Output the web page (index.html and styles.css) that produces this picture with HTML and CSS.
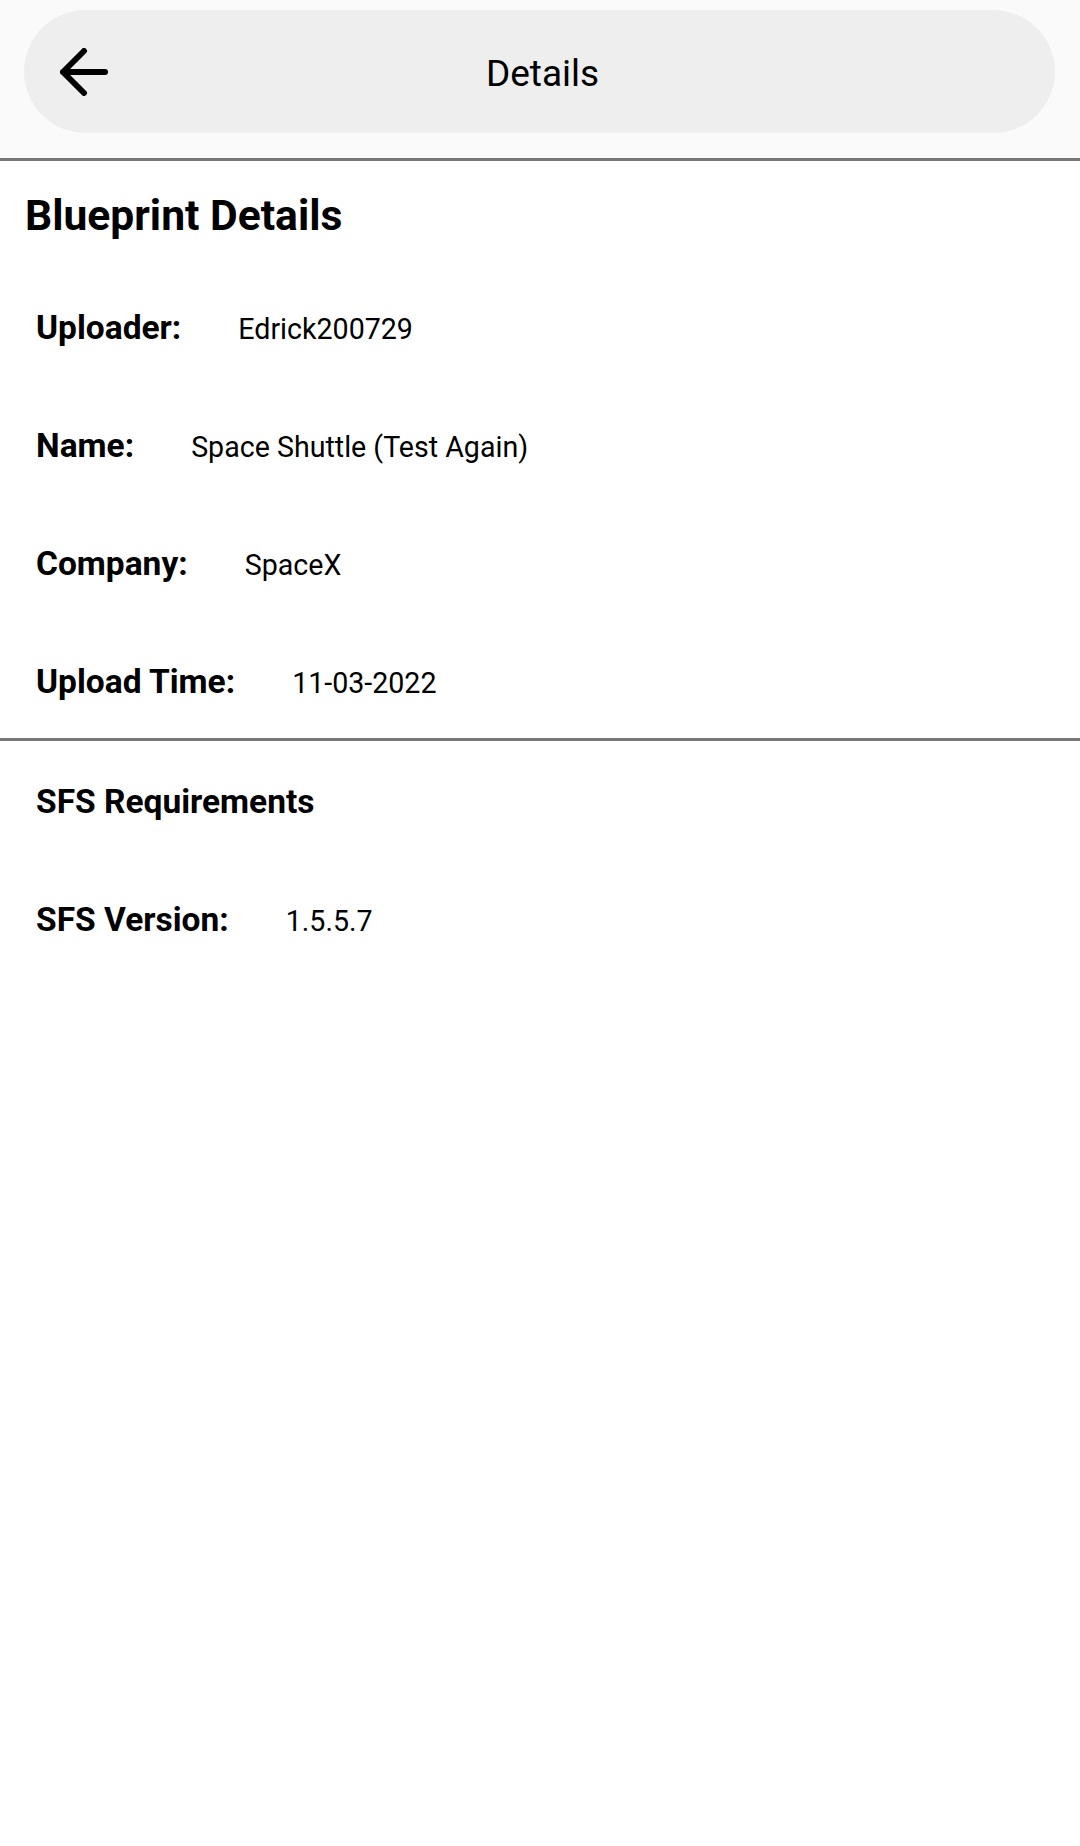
FILE: index.html
```html
<!DOCTYPE html>
<html lang="en">
<head>
<meta charset="utf-8">
<title>Details</title>
<link rel="stylesheet" href="styles.css">
</head>
<body>
  <header class="appbar">
    <div class="pill">
      <div class="pill-left">
        <svg class="back" width="48" height="48" viewBox="0 0 48 48" aria-hidden="true">
          <path d="M3 24 H45 M3 24 L24 3 M3 24 L24 45" fill="none" stroke="#000" stroke-width="6" stroke-linecap="round" stroke-linejoin="round"/>
        </svg>
      </div>
      <div class="pill-title">Details</div>
      <div class="pill-right"></div>
    </div>
  </header>

  <main class="content">
    <h1 class="heading">Blueprint Details</h1>
    <div class="rows">
      <div class="row"><span class="label">Uploader:</span><span class="value">Edrick200729</span></div>
      <div class="row"><span class="label">Name:</span><span class="value">Space Shuttle (Test Again)</span></div>
      <div class="row"><span class="label">Company:</span><span class="value">SpaceX</span></div>
      <div class="row"><span class="label">Upload Time:</span><span class="value">11-03-2022</span></div>
    </div>
    <hr class="divider">
    <div class="section-title">SFS Requirements</div>
    <div class="row row-version"><span class="label">SFS Version:</span><span class="value">1.5.5.7</span></div>
  </main>
</body>
</html>
```
FILE: styles.css
```css
html, body {
  margin: 0;
  padding: 0;
  background: #ffffff;
  font-family: Roboto, "Noto Sans", "Liberation Sans", sans-serif;
  color: #000;
}

.appbar {
  background: #fafafa;
  padding: 10px 25px 25px 24px;
  border-bottom: 3px solid #777777;
}

.pill {
  height: 123px;
  border-radius: 62px;
  background: #eeeeee;
  display: grid;
  grid-template-columns: 1fr auto 1fr;
  align-items: center;
}

.pill-left {
  display: flex;
  align-items: center;
  padding-left: 36px;
}

.back {
  display: block;
}

.pill-title {
  font-size: 37px;
  font-weight: 400;
  padding-left: 6px;
  padding-top: 4px;
}

.content {
  padding: 0;
}

.heading {
  margin: 29px 0 0 25px;
  font-size: 42.6px;
  line-height: 50px;
  font-weight: 700;
}

.rows {
  display: flex;
  flex-direction: column;
  gap: 78px;
  margin-top: 68px;
  padding-left: 36px;
}

.row {
  display: flex;
  align-items: baseline;
  gap: 57px;
  height: 40px;
}

.label {
  font-size: 33.5px;
  line-height: 40px;
  font-weight: 700;
}

.value {
  font-size: 28.6px;
  line-height: 40px;
  font-weight: 400;
}

.divider {
  border: 0;
  height: 3px;
  background: #777777;
  margin: 36px 0 0 0;
}

.section-title {
  margin-top: 41px;
  padding-left: 36px;
  font-size: 33.5px;
  line-height: 40px;
  font-weight: 700;
}

.row-version {
  margin-top: 78px;
  padding-left: 36px;
}
```
